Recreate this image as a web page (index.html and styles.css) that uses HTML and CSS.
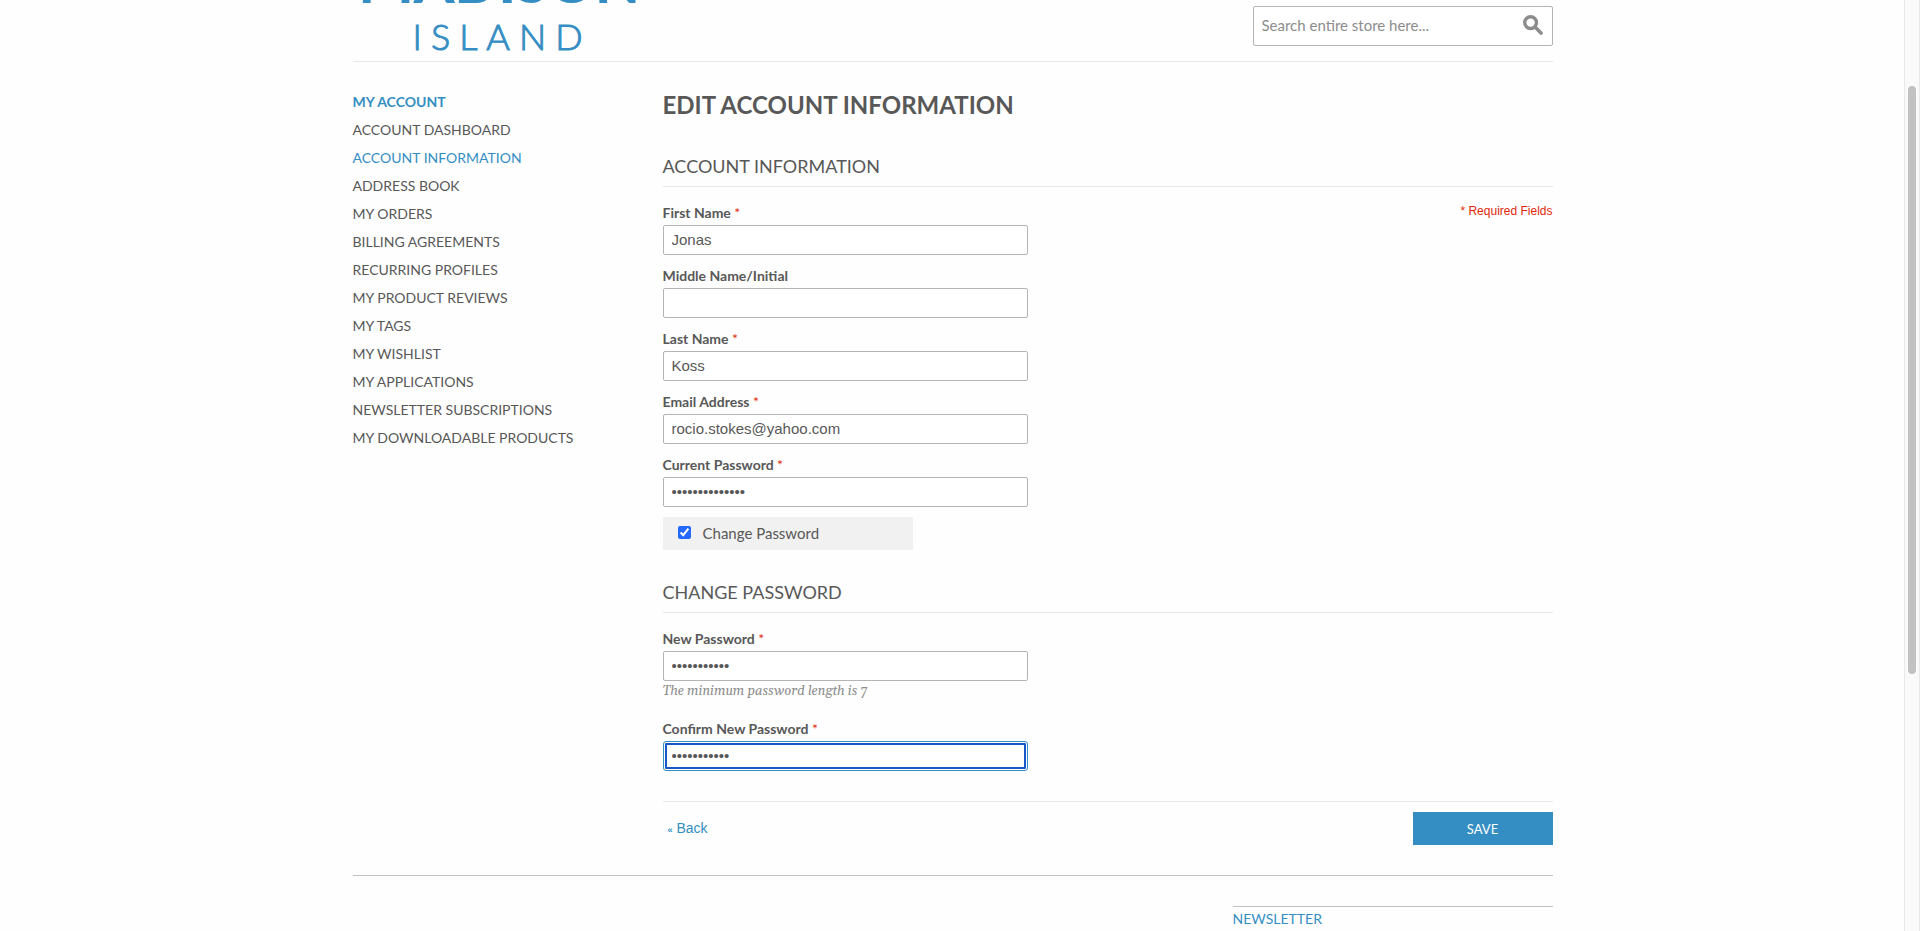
FILE: index.html
```html
<!DOCTYPE html>
<html lang="en">
<head>
<meta charset="utf-8">
<title>Edit Account Information</title>
<link rel="stylesheet" href="styles.css">
</head>
<body>
<div class="page">
  <div class="container">
    <header class="header">
      <a class="logo" href="#"><span class="logo-top">MADISON</span><span class="logo-bottom">ISLAND</span></a>
      <form class="search">
        <input class="search-input" type="search" aria-label="Search entire store here..." placeholder="Search entire store here...">
        <button class="search-button" type="button" aria-label="Search">
          <svg width="20" height="20" viewBox="0 0 20 20" fill="none" stroke="#8c8c8c"><circle cx="7.6" cy="7.6" r="5.9" stroke-width="3.4"/><path d="M12 12l6 6" stroke-width="3.6" stroke-linecap="round"/></svg>
        </button>
      </form>
    </header>
    <div class="columns">
      <nav class="sidebar" aria-label="My account">
        <h2 class="sidebar-title">My Account</h2>
        <ul class="sidebar-list">
          <li><a href="#">Account Dashboard</a></li>
          <li><a class="current" href="#">Account Information</a></li>
          <li><a href="#">Address Book</a></li>
          <li><a href="#">My Orders</a></li>
          <li><a href="#">Billing Agreements</a></li>
          <li><a href="#">Recurring Profiles</a></li>
          <li><a href="#">My Product Reviews</a></li>
          <li><a href="#">My Tags</a></li>
          <li><a href="#">My Wishlist</a></li>
          <li><a href="#">My Applications</a></li>
          <li><a href="#">Newsletter Subscriptions</a></li>
          <li><a href="#">My Downloadable Products</a></li>
        </ul>
      </nav>
      <main class="main">
        <h1 class="title">Edit Account Information</h1>
        <form>
          <section class="group">
            <h2 class="legend">Account Information</h2>
            <div class="group-body">
              <div class="fields">
                <div class="field"><label for="first">First Name <em>*</em></label><input class="text" id="first" type="text" value="Jonas"></div>
                <div class="field"><label for="middle">Middle Name/Initial</label><input class="text" id="middle" type="text"></div>
                <div class="field"><label for="last">Last Name <em>*</em></label><input class="text" id="last" type="text" value="Koss"></div>
                <div class="field"><label for="email">Email Address <em>*</em></label><input class="text" id="email" type="email" value="rocio.stokes@yahoo.com"></div>
                <div class="field"><label for="current">Current Password <em>*</em></label><input class="text" id="current" type="password" value="aaaaaaaaaaaaaa"></div>
              </div>
              <p class="required">* Required Fields</p>
            </div>
            <div class="toggle"><input id="change" type="checkbox" checked><label for="change">Change Password</label></div>
          </section>
          <section class="group">
            <h2 class="legend">Change Password</h2>
            <div class="group-body">
              <div class="fields fields-loose">
                <div class="field"><label for="new">New Password <em>*</em></label><input class="text" id="new" type="password" value="aaaaaaaaaaa"><p class="hint">The minimum password length is 7</p></div>
                <div class="field"><label for="confirm">Confirm New Password <em>*</em></label><input class="text is-focused" id="confirm" type="password" value="aaaaaaaaaaa"></div>
              </div>
            </div>
          </section>
          <div class="actions">
            <a class="back" href="#"><small>«</small> Back</a>
            <button class="save" type="submit">Save</button>
          </div>
        </form>
      </main>
    </div>
    <footer class="footer">
      <h2 class="newsletter">Newsletter</h2>
    </footer>
  </div>
</div>
<div class="scrollbar" aria-hidden="true"><div class="thumb"></div></div>
</body>
</html>
```
FILE: styles.css
```css
* { box-sizing: border-box; }

body {
  display: flex;
  height: 100vh;
  margin: 0;
  overflow: hidden;
  background: #fefefe;
  color: #585858;
  font: 14px/28px Lato, sans-serif;
}

h1, h2, p, ul { margin: 0; padding: 0; }
ul { list-style: none; }
a { color: inherit; text-decoration: none; }
em { color: #df280a; font-style: normal; font-weight: 400; }

.page { flex: 1; min-width: 0; padding-left: 1px; overflow: hidden; }
.container { max-width: 1200px; margin: 0 auto; }

.header {
  display: flex;
  align-items: flex-end;
  justify-content: space-between;
  height: 62px;
  border-bottom: 1px solid #e8e8e8;
}

.logo { display: flex; flex-direction: column; gap: 10px; padding-left: 6px; color: #348ec3; }
.logo-top { font-size: 58px; line-height: 54px; font-weight: 900; }
.logo-bottom { padding: 0 0 7px 54px; font-size: 36px; line-height: 36px; font-weight: 300; letter-spacing: 9px; -webkit-text-stroke: 1px #348ec3; }

.search {
  display: flex;
  align-items: center;
  width: 300px;
  height: 40px;
  margin-bottom: 15px;
  border: 1px solid #b4b4b4;
  border-radius: 2px;
  background: #fff;
}
.search-input {
  flex: 1;
  min-width: 0;
  padding: 0 8px 2px;
  border: 0;
  outline: 0;
  background: none;
  color: #585858;
  font: 15px Lato, sans-serif;
}
.search-input::placeholder { color: #8c8c8c; }
.search-button { display: flex; padding: 0 9px 3px; border: 0; background: none; }

.columns {
  display: grid;
  grid-template-columns: 310px 1fr;
  padding: 26px 0 30px;
  border-bottom: 1px solid #c2c2c2;
}

.sidebar { text-transform: uppercase; }
.sidebar-title { color: #348ec3; font-size: 14px; font-weight: 700; }
.current { color: #348ec3; }

.title { font-size: 24px; line-height: 34px; font-weight: 700; text-transform: uppercase; }

.group { padding-bottom: 30px; }
.title + form { padding-top: 32px; }
.legend {
  padding-bottom: 8px;
  border-bottom: 1px solid #e8e8e8;
  font-size: 18px;
  line-height: 24px;
  font-weight: 400;
  text-transform: uppercase;
}
.group-body { display: flex; justify-content: space-between; padding-top: 16px; }
.fields { display: grid; flex: 0 1 365px; gap: 11px; }
.fields-loose { gap: 18px; }
.field { display: flex; flex-direction: column; }
.field label { margin-bottom: 3px; font-size: 14px; line-height: 19px; font-weight: 700; }

.text {
  width: 100%;
  height: 30px;
  padding: 0 8px 1px;
  border: 1px solid #b4b4b4;
  border-radius: 2px;
  background: #fff;
  color: #585858;
  font: 15px "Liberation Sans", Arial, sans-serif;
}
.is-focused { border-color: #348ec3; outline: 2px solid #1a57c8; outline-offset: -4px; border-radius: 3px; }

.required {
  color: #df280a;
  font: 12px/16px "Liberation Sans", Arial, sans-serif;
}
.hint { color: #8c8c8c; font: italic 13px/20px Gelasio, "Liberation Serif", serif; }

.toggle {
  display: flex;
  align-items: center;
  gap: 12px;
  width: 250px;
  height: 33px;
  margin-top: 10px;
  padding: 0 0 2px 15px;
  background: #f1f1f1;
  font-size: 15px;
}
.toggle input { width: 13px; height: 13px; margin: 0; accent-color: #2468ff; }

.actions {
  display: flex;
  align-items: center;
  justify-content: space-between;
  padding-top: 10px;
  border-top: 1px solid #e8e8e8;
}
.back { padding-left: 5px; color: #348ec3; font-family: "Liberation Sans", Arial, sans-serif; }
.back small { font-size: 9px; font-weight: 700; }
.save {
  width: 140px;
  height: 33px;
  padding: 0;
  border: 0;
  background: #348ec3;
  color: #fff;
  font: 13px Lato, sans-serif;
  text-transform: uppercase;
}

.footer { display: flex; justify-content: flex-end; padding-top: 30px; }
.newsletter {
  width: 320px;
  border-top: 1px solid #c2c2c2;
  color: #348ec3;
  font-size: 14px;
  line-height: 24px;
  font-weight: 400;
  text-transform: uppercase;
}

.scrollbar {
  flex: 0 0 15px;
  padding: 86px 3px 0;
  border: solid #e8e8e8;
  border-width: 0 1px;
  background: #fafafa;
}
.thumb { width: 8px; height: 588px; border-radius: 4px; background: #c1c1c1; }
```
